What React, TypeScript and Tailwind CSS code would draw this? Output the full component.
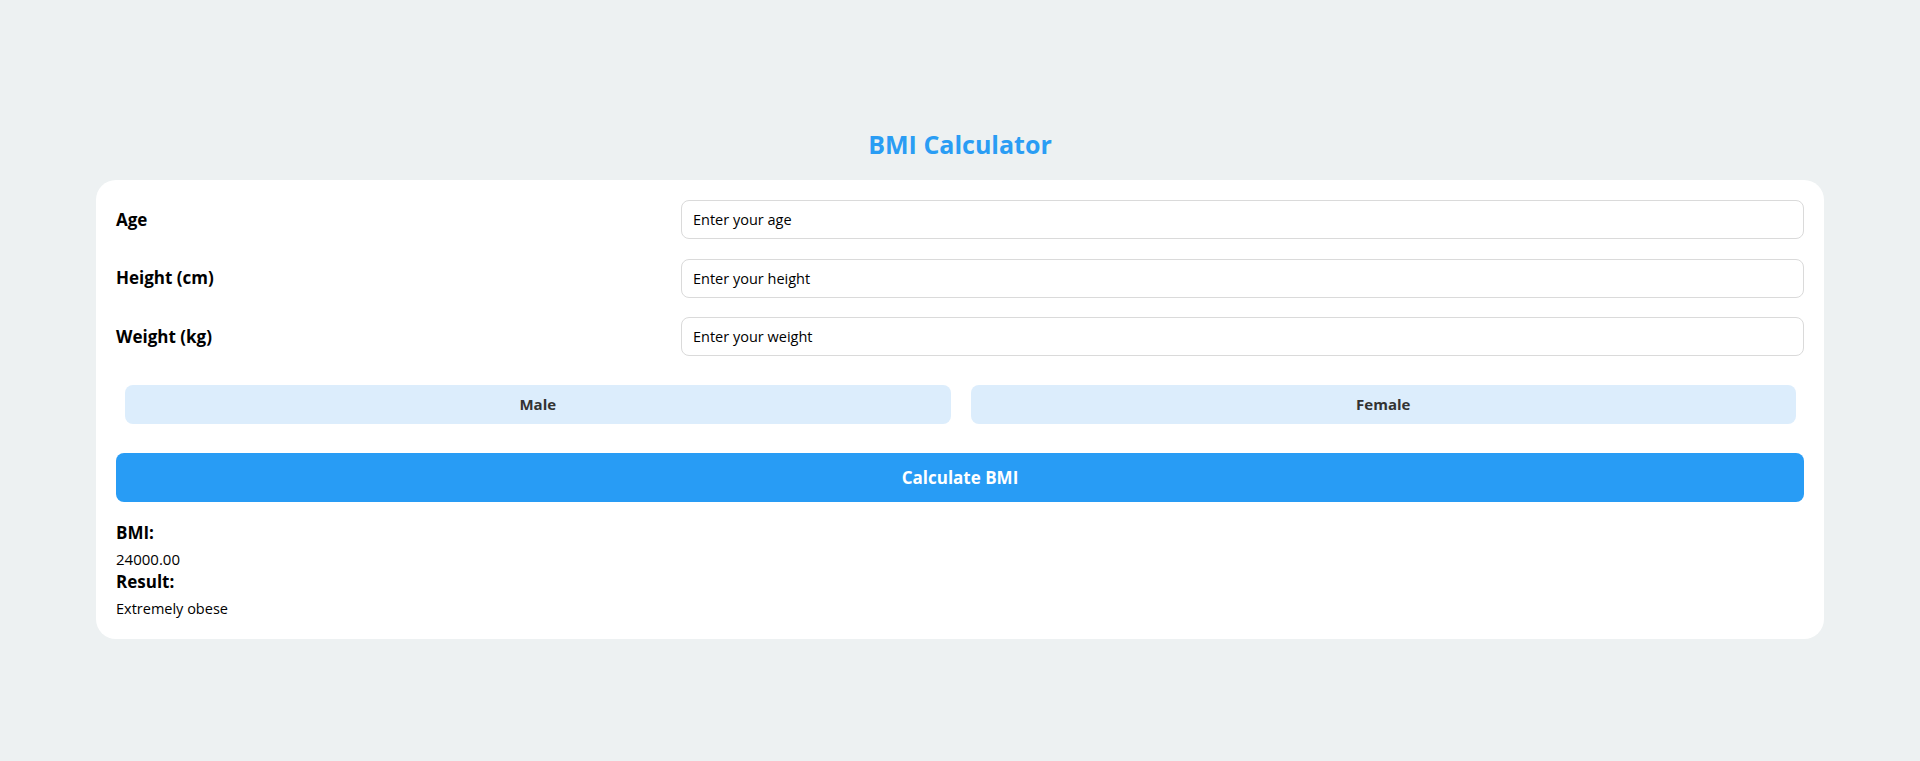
import { useState } from "react";

export default function App() {
    const [gender, setGender] = useState<string>("");

    return (
        <div className="min-h-screen w-full bg-[#edf1f2] flex flex-col items-center pt-[128px] font-['Open_Sans',sans-serif]">
            <h1 className="text-[25px] leading-[32px] font-bold text-[#2a9df4] mb-[20px]">BMI Calculator</h1>
            <div className="w-[90%] bg-white rounded-[20px] p-5">
                {/* Inputs */}
                <div className="flex flex-col gap-[19.5px]">
                    <div className="flex items-center">
                        <label className="w-[565px] shrink-0 text-[17px] font-bold text-black">Age</label>
                        <input
                            className="flex-1 h-[39px] border border-[#dadada] rounded-[8px] px-[11px] text-[14.5px] text-black placeholder:text-black outline-none"
                            type="text"
                            placeholder="Enter your age"
                        />
                    </div>
                    <div className="flex items-center">
                        <label className="w-[565px] shrink-0 text-[17px] font-bold text-black">Height (cm)</label>
                        <input
                            className="flex-1 h-[39px] border border-[#dadada] rounded-[8px] px-[11px] text-[14.5px] text-black placeholder:text-black outline-none"
                            type="text"
                            placeholder="Enter your height"
                        />
                    </div>
                    <div className="flex items-center">
                        <label className="w-[565px] shrink-0 text-[17px] font-bold text-black">Weight (kg)</label>
                        <input
                            className="flex-1 h-[39px] border border-[#dadada] rounded-[8px] px-[11px] text-[14.5px] text-black placeholder:text-black outline-none"
                            type="text"
                            placeholder="Enter your weight"
                        />
                    </div>
                </div>
                {/* Gender */}
                <div className="grid grid-cols-2 gap-5 pl-[9px] pr-[8px] mt-[29px]">
                    <button
                        onClick={() => setGender("male")}
                        className="h-[39px] rounded-[8px] bg-[#dcedfc] text-[#333] text-[15px] font-bold cursor-pointer"
                    >
                        Male
                    </button>
                    <button
                        onClick={() => setGender("female")}
                        className="h-[39px] rounded-[8px] bg-[#dcedfc] text-[#333] text-[15px] font-bold cursor-pointer"
                    >
                        Female
                    </button>
                </div>
                <button className="w-full h-[49px] mt-[29px] rounded-[8px] bg-[#289cf5] text-white text-[17px] font-bold cursor-pointer">
                    Calculate BMI
                </button>
                {/* Result */}
                <div className="mt-[19px] text-black">
                    <h3 className="text-[17px] leading-[24px] font-bold mb-[4px]">BMI:</h3>
                    <p className="text-[15px] leading-[21px]">24000.00</p>
                    <h3 className="text-[17px] leading-[24px] font-bold mb-[4px]">Result:</h3>
                    <p className="text-[14.5px] leading-[21px]">Extremely obese</p>
                    <span className="hidden">{gender}</span>
                </div>
            </div>
        </div>
    );
}
